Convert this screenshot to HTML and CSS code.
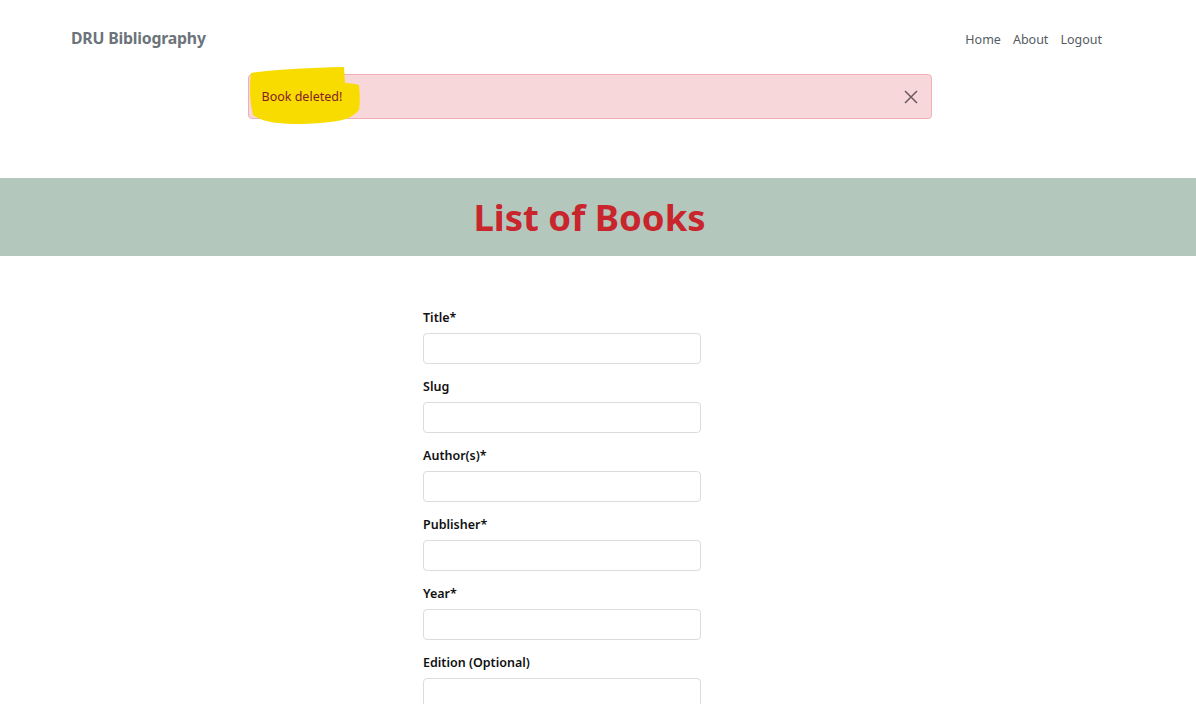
FILE: index.html
```html
<!DOCTYPE html>
<html lang="en">
<head>
<meta charset="utf-8">
<title>DRU Bibliography</title>
<link rel="stylesheet" href="styles.css">
</head>
<body>
<div class="page">
  <nav class="navbar">
    <a class="brand" href="#">DRU Bibliography</a>
    <ul class="nav-links">
      <li><a href="#">Home</a></li>
      <li><a href="#">About</a></li>
      <li><a href="#">Logout</a></li>
    </ul>
  </nav>

  <div class="alert-wrap">
    <div class="alert">
      <svg class="highlight" width="120" height="62" viewBox="0 0 120 62">
        <path d="M2 8 C30 4 60 3 95 2 L96 18 C102 18 106 19 110 20 C111 30 111 38 110 45 C104 52 96 55 88 56 C70 59 45 60 30 58 C18 57 10 54 4 50 C1 38 0 22 2 8 Z" fill="#f8dc00"/>
      </svg>
      <span class="alert-text">Book deleted!</span>
      <button class="alert-close" type="button" aria-label="Close">
        <svg width="16" height="16" viewBox="0 0 16 16"><path d="M2 2 L14 14 M14 2 L2 14" stroke="#6b5a5d" stroke-width="1.5" fill="none"/></svg>
      </button>
    </div>
  </div>

  <header class="banner">
    <h1>List of Books</h1>
  </header>

  <form class="book-form">
    <div class="field"><label>Title*</label><input type="text"></div>
    <div class="field"><label>Slug</label><input type="text"></div>
    <div class="field"><label>Author(s)*</label><input type="text"></div>
    <div class="field"><label>Publisher*</label><input type="text"></div>
    <div class="field"><label>Year*</label><input type="text"></div>
    <div class="field"><label>Edition (Optional)</label><input type="text"></div>
  </form>
</div>
</body>
</html>
```

FILE: styles.css
```css
* { box-sizing: border-box; }
html, body { margin: 0; padding: 0; background: #fff; }
body {
  font-family: "Noto Sans", "Open Sans", sans-serif;
  color: #212529;
  overflow: hidden;
}
.page { width: 100%; }

.navbar {
  display: flex;
  align-items: center;
  justify-content: space-between;
  height: 76px;
  padding: 0 94px 0 71px;
}
.brand {
  font-size: 15.8px;
  font-weight: 700;
  color: #6c737a;
  text-decoration: none;
  letter-spacing: -0.2px;
}
.nav-links {
  display: flex;
  gap: 12px;
  list-style: none;
  margin: 0;
  padding: 0;
}
.nav-links a {
  font-size: 12.5px;
  color: #555c62;
  text-decoration: none;
}

.alert-wrap {
  display: flex;
  justify-content: center;
  margin-top: -2px;
  padding-right: 17px;
}
.alert {
  position: relative;
  width: 684px;
  height: 45px;
  background: #f8d7da;
  border: 1px solid #f1aeb5;
  border-radius: 4px;
  display: flex;
  align-items: center;
  justify-content: space-between;
  padding: 0 12px 0 13px;
}
.highlight {
  position: absolute;
  left: 0;
  top: -10px;
}
.alert-text {
  position: relative;
  font-size: 12.5px;
  color: #842029;
}
.alert-close {
  background: none;
  border: none;
  padding: 0;
  display: flex;
  cursor: pointer;
}

.banner {
  margin-top: 59px;
  height: 78px;
  background: #b3c7bd;
  display: flex;
  align-items: center;
  justify-content: center;
  padding-right: 17px;
}
.banner h1 {
  margin: 0;
  font-size: 36.5px;
  font-weight: 700;
  color: #c9252c;
}

.book-form {
  width: 278px;
  margin: 53px 0 0 423px;
}
.field { margin-bottom: 14px; }
.field label {
  display: block;
  font-size: 12.5px;
  font-weight: 600;
  color: #111;
  line-height: 18px;
  margin-bottom: 6px;
}
.field input {
  display: block;
  width: 278px;
  height: 31px;
  border: 1px solid #dcdcdc;
  border-radius: 4px;
  background: #fff;
}
```
